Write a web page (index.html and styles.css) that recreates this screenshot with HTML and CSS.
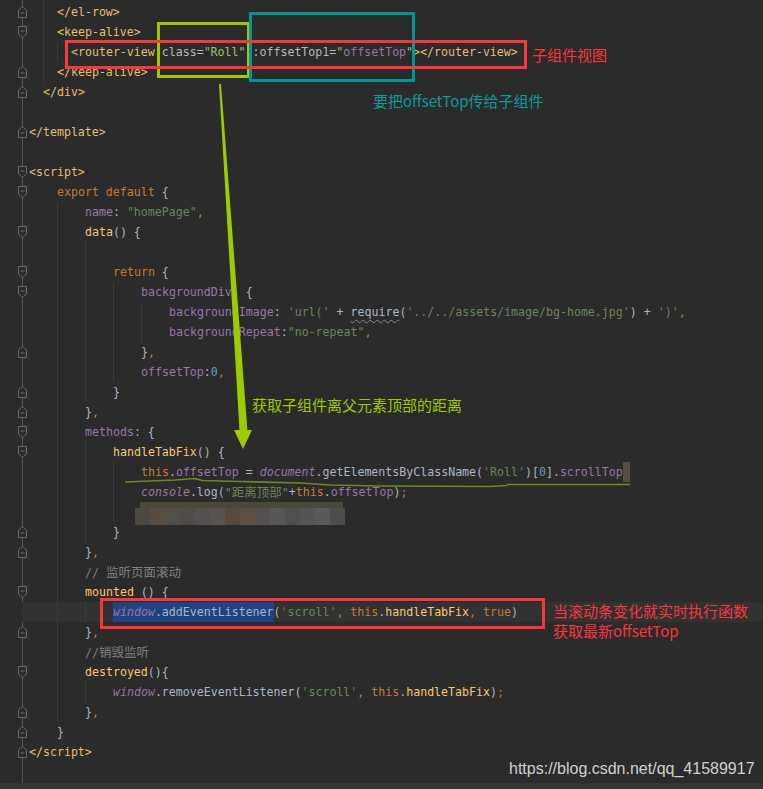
FILE: index.html
```html
<!DOCTYPE html>
<html lang="en">
<head>
    <meta charset="UTF-8">
    <meta name="viewport" content="width=device-width, initial-scale=1.0">
    <title>homePage.vue</title>
    <link rel="stylesheet" href="styles.css">
</head>
<body>
<div class="editor">
    <div class="lines">
        <div class="ln"><span class="gut"><svg class="fold" viewBox="0 0 9 12"><path d="M0.5 11.5H8.5V4L4.5 0.5L0.5 4Z"/><path d="M2.5 7H6.5"/></svg></span><span class="code"><span class="t"></span><span class="t g"></span><span class="tag">&lt;/el-row&gt;</span></span></div>
        <div class="ln"><span class="gut"><svg class="fold" viewBox="0 0 9 12"><path d="M0.5 0.5H8.5V8L4.5 11.5L0.5 8Z"/><path d="M2.5 5H6.5"/></svg></span><span class="code"><span class="t"></span><span class="t g"></span><span class="tag">&lt;keep-alive&gt;</span></span></div>
        <div class="ln"><span class="gut"></span><span class="code"><span class="t"></span><span class="t g"></span><span class="t g"></span><span class="tag">&lt;router-view</span><span class="at"> class=</span><span class="av">"Roll"</span><span class="at"> :offsetTop1=</span><span class="av">"</span><span class="pr">offsetTop</span><span class="av">"</span><span class="tag">&gt;&lt;/router-view&gt;</span></span></div>
        <div class="ln"><span class="gut"><svg class="fold" viewBox="0 0 9 12"><path d="M0.5 11.5H8.5V4L4.5 0.5L0.5 4Z"/><path d="M2.5 7H6.5"/></svg></span><span class="code"><span class="t"></span><span class="t g"></span><span class="tag">&lt;/keep-alive&gt;</span></span></div>
        <div class="ln"><span class="gut"><svg class="fold" viewBox="0 0 9 12"><path d="M0.5 11.5H8.5V4L4.5 0.5L0.5 4Z"/><path d="M2.5 7H6.5"/></svg></span><span class="code"><span class="t"></span><span class="tag">&lt;/div&gt;</span></span></div>
        <div class="ln"><span class="gut"></span><span class="code"></span></div>
        <div class="ln"><span class="gut"><svg class="fold" viewBox="0 0 9 12"><path d="M0.5 11.5H8.5V4L4.5 0.5L0.5 4Z"/><path d="M2.5 7H6.5"/></svg></span><span class="code"><span class="tag">&lt;/template&gt;</span></span></div>
        <div class="ln"><span class="gut"></span><span class="code"></span></div>
        <div class="ln"><span class="gut"><svg class="fold" viewBox="0 0 9 12"><path d="M0.5 0.5H8.5V8L4.5 11.5L0.5 8Z"/><path d="M2.5 5H6.5"/></svg></span><span class="code"><span class="tag">&lt;script&gt;</span></span></div>
        <div class="ln"><span class="gut"><svg class="fold" viewBox="0 0 9 12"><path d="M0.5 0.5H8.5V8L4.5 11.5L0.5 8Z"/><path d="M2.5 5H6.5"/></svg></span><span class="code"><span class="i"></span><span class="kw">export default</span> {</span></div>
        <div class="ln"><span class="gut"></span><span class="code"><span class="i"></span><span class="i g"></span><span class="pr">name</span>: <span class="st">"homePage"</span><span class="kw">,</span></span></div>
        <div class="ln"><span class="gut"><svg class="fold" viewBox="0 0 9 12"><path d="M0.5 0.5H8.5V8L4.5 11.5L0.5 8Z"/><path d="M2.5 5H6.5"/></svg></span><span class="code"><span class="i"></span><span class="i g"></span><span class="fn">data</span>() {</span></div>
        <div class="ln"><span class="gut"></span><span class="code"><span class="i"></span><span class="i g"></span><span class="i g"></span></span></div>
        <div class="ln"><span class="gut"><svg class="fold" viewBox="0 0 9 12"><path d="M0.5 0.5H8.5V8L4.5 11.5L0.5 8Z"/><path d="M2.5 5H6.5"/></svg></span><span class="code"><span class="i"></span><span class="i g"></span><span class="i g"></span><span class="kw">return</span> {</span></div>
        <div class="ln"><span class="gut"><svg class="fold" viewBox="0 0 9 12"><path d="M0.5 0.5H8.5V8L4.5 11.5L0.5 8Z"/><path d="M2.5 5H6.5"/></svg></span><span class="code"><span class="i"></span><span class="i g"></span><span class="i g"></span><span class="i g"></span><span class="pr">backgroundDiv</span>: {</span></div>
        <div class="ln"><span class="gut"></span><span class="code"><span class="i"></span><span class="i g"></span><span class="i g"></span><span class="i g"></span><span class="i g"></span><span class="pr">backgroundImage</span>: <span class="st">'url('</span> + <span class="warn">require</span>(<span class="st">'../../assets/image/bg-home.jpg'</span>) + <span class="st">')'</span><span class="kw">,</span></span></div>
        <div class="ln"><span class="gut"></span><span class="code"><span class="i"></span><span class="i g"></span><span class="i g"></span><span class="i g"></span><span class="i g"></span><span class="pr">backgroundRepeat</span>:<span class="st">"no-repeat"</span><span class="kw">,</span></span></div>
        <div class="ln"><span class="gut"><svg class="fold" viewBox="0 0 9 12"><path d="M0.5 11.5H8.5V4L4.5 0.5L0.5 4Z"/><path d="M2.5 7H6.5"/></svg></span><span class="code"><span class="i"></span><span class="i g"></span><span class="i g"></span><span class="i g"></span>}<span class="kw">,</span></span></div>
        <div class="ln"><span class="gut"></span><span class="code"><span class="i"></span><span class="i g"></span><span class="i g"></span><span class="i g"></span><span class="pr">offsetTop</span>:<span class="nu">0</span><span class="kw">,</span></span></div>
        <div class="ln"><span class="gut"><svg class="fold" viewBox="0 0 9 12"><path d="M0.5 11.5H8.5V4L4.5 0.5L0.5 4Z"/><path d="M2.5 7H6.5"/></svg></span><span class="code"><span class="i"></span><span class="i g"></span><span class="i g"></span>}</span></div>
        <div class="ln"><span class="gut"><svg class="fold" viewBox="0 0 9 12"><path d="M0.5 11.5H8.5V4L4.5 0.5L0.5 4Z"/><path d="M2.5 7H6.5"/></svg></span><span class="code"><span class="i"></span><span class="i g"></span>}<span class="kw">,</span></span></div>
        <div class="ln"><span class="gut"><svg class="fold" viewBox="0 0 9 12"><path d="M0.5 0.5H8.5V8L4.5 11.5L0.5 8Z"/><path d="M2.5 5H6.5"/></svg></span><span class="code"><span class="i"></span><span class="i g"></span><span class="pr">methods</span>: {</span></div>
        <div class="ln"><span class="gut"><svg class="fold" viewBox="0 0 9 12"><path d="M0.5 0.5H8.5V8L4.5 11.5L0.5 8Z"/><path d="M2.5 5H6.5"/></svg></span><span class="code"><span class="i"></span><span class="i g"></span><span class="i g"></span><span class="fn">handleTabFix</span>() {</span></div>
        <div class="ln"><span class="gut"></span><span class="code"><span class="i"></span><span class="i g"></span><span class="i g"></span><span class="i g"></span><span class="kw">this</span>.<span class="pr">offsetTop</span> = <span class="gl">document</span>.getElementsByClassName(<span class="st">'Roll'</span>)[<span class="nu">0</span>].<span class="pr">scrollTop</span><span class="caret"></span></span></div>
        <div class="ln"><span class="gut"></span><span class="code"><span class="i"></span><span class="i g"></span><span class="i g"></span><span class="i g"></span><span class="gl">console</span>.log(<span class="st">"<span class="cj">距离顶部</span>"</span>+<span class="kw">this</span>.<span class="pr">offsetTop</span>)<span class="kw">;</span></span></div>
        <div class="ln"><span class="gut"></span><span class="code"><span class="i"></span><span class="i g"></span><span class="i g"></span><span class="i g"></span></span></div>
        <div class="ln"><span class="gut"><svg class="fold" viewBox="0 0 9 12"><path d="M0.5 11.5H8.5V4L4.5 0.5L0.5 4Z"/><path d="M2.5 7H6.5"/></svg></span><span class="code"><span class="i"></span><span class="i g"></span><span class="i g"></span>}</span></div>
        <div class="ln"><span class="gut"><svg class="fold" viewBox="0 0 9 12"><path d="M0.5 11.5H8.5V4L4.5 0.5L0.5 4Z"/><path d="M2.5 7H6.5"/></svg></span><span class="code"><span class="i"></span><span class="i g"></span>}<span class="kw">,</span></span></div>
        <div class="ln"><span class="gut"></span><span class="code"><span class="i"></span><span class="i g"></span><span class="cm">// <span class="cj">监听页面滚动</span></span></span></div>
        <div class="ln"><span class="gut"><svg class="fold" viewBox="0 0 9 12"><path d="M0.5 0.5H8.5V8L4.5 11.5L0.5 8Z"/><path d="M2.5 5H6.5"/></svg></span><span class="code"><span class="i"></span><span class="i g"></span><span class="fn">mounted</span> () {</span></div>
        <div class="ln cur"><span class="gut"></span><span class="code"><span class="i"></span><span class="i g"></span><span class="i g"></span><span class="sel"><span class="gl">window</span>.addEventListener</span>(<span class="st">'scroll'</span><span class="kw">, this</span>.<span class="fn">handleTabFix</span><span class="kw">, true</span>)</span></div>
        <div class="ln"><span class="gut"><svg class="fold" viewBox="0 0 9 12"><path d="M0.5 11.5H8.5V4L4.5 0.5L0.5 4Z"/><path d="M2.5 7H6.5"/></svg></span><span class="code"><span class="i"></span><span class="i g"></span>}<span class="kw">,</span></span></div>
        <div class="ln"><span class="gut"></span><span class="code"><span class="i"></span><span class="i g"></span><span class="cm">//<span class="cj">销毁监听</span></span></span></div>
        <div class="ln"><span class="gut"><svg class="fold" viewBox="0 0 9 12"><path d="M0.5 0.5H8.5V8L4.5 11.5L0.5 8Z"/><path d="M2.5 5H6.5"/></svg></span><span class="code"><span class="i"></span><span class="i g"></span><span class="fn">destroyed</span>(){</span></div>
        <div class="ln"><span class="gut"></span><span class="code"><span class="i"></span><span class="i g"></span><span class="i g"></span><span class="gl">window</span>.removeEventListener(<span class="st">'scroll'</span><span class="kw">, this</span>.<span class="fn">handleTabFix</span>)<span class="kw">;</span></span></div>
        <div class="ln"><span class="gut"><svg class="fold" viewBox="0 0 9 12"><path d="M0.5 11.5H8.5V4L4.5 0.5L0.5 4Z"/><path d="M2.5 7H6.5"/></svg></span><span class="code"><span class="i"></span><span class="i g"></span>}<span class="kw">,</span></span></div>
        <div class="ln"><span class="gut"><svg class="fold" viewBox="0 0 9 12"><path d="M0.5 11.5H8.5V4L4.5 0.5L0.5 4Z"/><path d="M2.5 7H6.5"/></svg></span><span class="code"><span class="i"></span>}</span></div>
        <div class="ln"><span class="gut"><svg class="fold" viewBox="0 0 9 12"><path d="M0.5 11.5H8.5V4L4.5 0.5L0.5 4Z"/><path d="M2.5 7H6.5"/></svg></span><span class="code"><span class="tag">&lt;/script&gt;</span></span></div>
    </div>
    <div class="bar"></div>

    <!-- annotations drawn over the code -->
    <div class="blur">
        <div class="blur-top"></div>
        <div class="blur-row">
            <span style="background:#4d4842"></span><span style="background:#5a4c3f"></span><span style="background:#534f4b"></span><span style="background:#4f4c4a"></span><span style="background:#53504f"></span><span style="background:#5b5352"></span><span style="background:#584b3e"></span><span style="background:#5d4f41"></span><span style="background:#555050"></span><span style="background:#595657"></span><span style="background:#524f4f"></span><span style="background:#575455"></span><span style="background:#5b5859"></span><span style="background:#504d4d"></span>
        </div>
    </div>
    <div class="box box-lime"></div>
    <div class="box box-teal"></div>
    <div class="box box-red box-view"></div>
    <div class="box box-red box-listen"></div>
    <svg class="marks" viewBox="0 0 763 789">
        <polygon class="arrow" points="219,84 221,84 247.5,431 239.5,431"/>
        <polygon class="arrow" points="234,430 252,430 243,449"/>
        <polyline class="squiggle" points="125,482 150,481 175,480 195,478.5 202,480.5 240,481.5 300,483 330,485 380,486 490,486.5 506,485.5 508,484.5 630,484.5"/>
    </svg>
    <div class="note note-red note-view">子组件视图</div>
    <div class="note note-teal">要把offsetTop传给子组件</div>
    <div class="note note-lime">获取子组件离父元素顶部的距离</div>
    <div class="note note-red note-listen">当滚动条变化就实时执行函数<br>获取最新offsetTop</div>
    <div class="watermark">https://blog.csdn.net/qq_41589917</div>
</div>
</body>
</html>
```
FILE: styles.css
```css
body {
    margin: 0;
    padding: 0;
    background-color: #2b2b2b;
    overflow: hidden;
}

.editor {
    position: relative;
    width: 763px;
    height: 789px;
    display: flex;
    flex-direction: column;
    background-color: #2b2b2b;
}

.lines {
    flex: 1;
    padding-top: 2px;
    /* gutter line behind the fold markers */
    background: linear-gradient(#555555, #555555) no-repeat 22px 0 / 1px 100%;
}

.bar {
    height: 6px;
    background-color: #353535;
}

.ln {
    display: flex;
    height: 20px;
    font-family: 'DejaVu Sans Mono', monospace;
    font-size: 11.6px;
    line-height: 20px;
    color: #a9b7c6;
    white-space: pre;
}

.ln.cur {
    background: linear-gradient(to right, transparent 22px, #323232 22px);
}

.gut {
    width: 29px;
    flex-shrink: 0;
    display: flex;
    align-items: center;
    padding-left: 18px;
    box-sizing: border-box;
}

.fold {
    width: 9px;
    height: 12px;
    fill: #2b2b2b;
    stroke: #6a6a6a;
    stroke-width: 1;
}

.code {
    display: flex;
    align-items: stretch;
}

/* indent units: template uses 2 spaces, script 4 */
.t {
    display: inline-block;
    width: 14px;
}

.i {
    display: inline-block;
    width: 28px;
}

.g {
    box-shadow: inset 1px 0 #3b3b3b;
}

.tag { color: #e8bf6a; }
.at { color: #bababa; }
.av { color: #a5c261; }
.kw { color: #cc7832; }
.pr { color: #9876aa; }
.st { color: #6a8759; }
.fn { color: #ffc66d; }
.nu { color: #6897bb; }
.cm { color: #808080; }
.gl { color: #9876aa; font-style: italic; }

.cj {
    font-family: 'Noto Sans CJK SC', sans-serif;
    font-size: 12.5px;
}

.warn {
    text-decoration: underline wavy #8c8c8c;
    text-decoration-thickness: 1px;
    text-underline-offset: 3px;
}

.sel {
    background-color: #214283;
}

.caret {
    display: inline-block;
    width: 7px;
    background-color: #524f41;
}

/* annotations */
.box {
    position: absolute;
    border: 3px solid;
    box-sizing: border-box;
}

.box-lime {
    left: 157px;
    top: 22px;
    width: 93px;
    height: 56px;
    border-color: #9fc800;
}

.box-teal {
    left: 249px;
    top: 12px;
    width: 166px;
    height: 70px;
    border-color: #00999b;
}

.box-red {
    border-color: #fb3636;
}

.box-view {
    left: 65px;
    top: 40px;
    width: 462px;
    height: 29px;
}

.box-listen {
    left: 100px;
    top: 598px;
    width: 445px;
    height: 31px;
}

.marks {
    position: absolute;
    left: 0;
    top: 0;
    width: 763px;
    height: 789px;
    pointer-events: none;
}

.arrow {
    fill: #9ccb00;
}

.squiggle {
    fill: none;
    stroke: #6f8a1b;
    stroke-width: 1.6;
}

.blur {
    position: absolute;
    left: 135px;
    top: 502px;
    width: 210px;
}

.blur-top {
    height: 6px;
    margin: 0 2px 0 5px;
    background-color: #4b4939;
}

.blur-row {
    display: flex;
    height: 17px;
}

.blur-row span {
    flex: 1;
}

.note {
    position: absolute;
    font-family: 'Noto Sans CJK SC', sans-serif;
    font-size: 15px;
    line-height: 20px;
    white-space: nowrap;
}

.note-red { color: #fb3636; }

.note-view {
    left: 532px;
    top: 45px;
}

.note-teal {
    left: 373px;
    top: 91px;
    color: #0a9c9c;
}

.note-lime {
    left: 252px;
    top: 395px;
    color: #9ccb00;
}

.note-listen {
    left: 553px;
    top: 601px;
}

.watermark {
    position: absolute;
    left: 509px;
    top: 760px;
    font-family: 'Liberation Sans', Arial, sans-serif;
    font-size: 16px;
    line-height: 18px;
    color: #d0d0d0;
}
```
